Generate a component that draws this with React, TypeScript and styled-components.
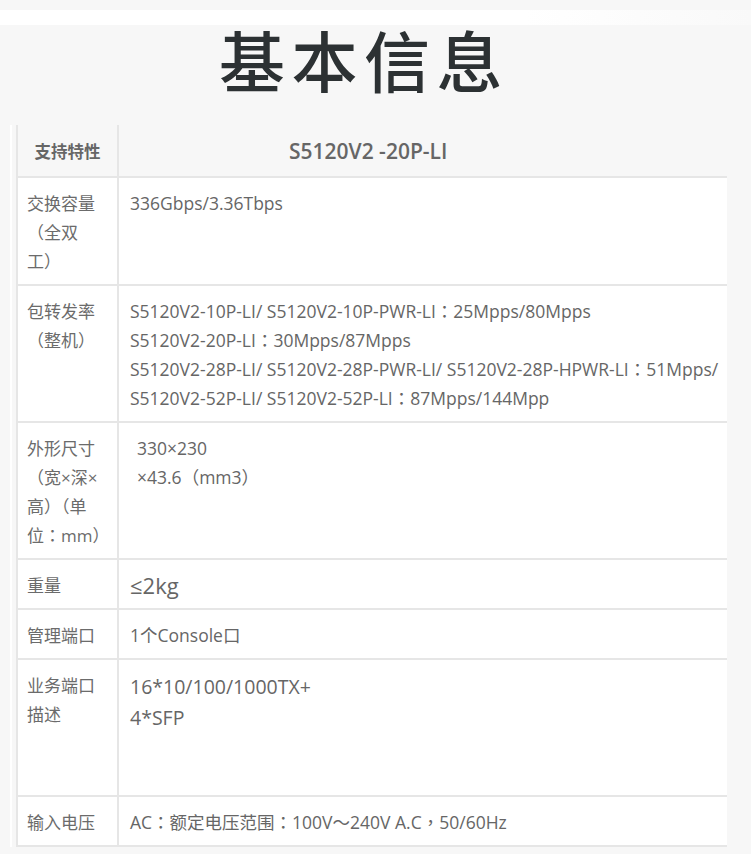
import React from "react";
import styled, { createGlobalStyle } from "styled-components";

type SpecRow = {
  label: string[];
  lines: string[];
  size?: number;
  lineHeight?: number;
  indent?: boolean;
  minHeight?: number;
};

const rows: SpecRow[] = [
  { label: ["交换容量", "（全双", "工）"], lines: ["336Gbps/3.36Tbps"] },
  {
    label: ["包转发率", "（整机）"],
    lines: [
      "S5120V2-10P-LI/ S5120V2-10P-PWR-LI：25Mpps/80Mpps",
      "S5120V2-20P-LI：30Mpps/87Mpps",
      "S5120V2-28P-LI/ S5120V2-28P-PWR-LI/ S5120V2-28P-HPWR-LI：51Mpps/",
      "S5120V2-52P-LI/ S5120V2-52P-LI：87Mpps/144Mpp",
    ],
  },
  {
    label: ["外形尺寸", "（宽×深×", "高）（单", "位：mm）"],
    lines: ["330×230", "×43.6（mm3）"],
    indent: true,
  },
  { label: ["重量"], lines: ["≤2kg"], size: 22 },
  { label: ["管理端口"], lines: ["1个Console口"] },
  {
    label: ["业务端口", "描述"],
    lines: ["16*10/100/1000TX+", "4*SFP"],
    size: 19.5,
    lineHeight: 31,
    minHeight: 135,
  },
  { label: ["输入电压"], lines: ["AC：额定电压范围：100V～240V A.C，50/60Hz"] },
];

// full-width punctuation sits centred in the reference, as the TC forms do
const withPunct = (text: string) =>
  text.split(/([：（），～])/).map((part, i) =>
    /^[：（），～]$/.test(part) ? <Punct key={i}>{part}</Punct> : part
  );

function App() {
  return (
    <Page>
      <GlobalStyle />
      <TopBand />
      <Title>基本信息</Title>
      <TableFrame>
        <Table>
          <Row $head>
            <HeadLabel>支持特性</HeadLabel>
            <HeadModel>S5120V2 -20P-LI</HeadModel>
          </Row>
          {rows.map((row, index) => (
            <Row key={index} $minHeight={row.minHeight}>
              <Label>
                {row.label.map((line, i) => (
                  <Line key={i}>{withPunct(line)}</Line>
                ))}
              </Label>
              <Value
                $size={row.size}
                $lineHeight={row.lineHeight}
                $indent={row.indent}
              >
                {row.lines.map((line, i) => (
                  <Line key={i}>{withPunct(line)}</Line>
                ))}
              </Value>
            </Row>
          ))}
        </Table>
      </TableFrame>
    </Page>
  );
}

export default App;

const GlobalStyle = createGlobalStyle`
  body {
    margin: 0;
    background: #f7f7f7;
  }
`;

const Page = styled.div`
  width: 751px;
  height: 854px;
  overflow: hidden;
  background: #f7f7f7;
  font-family: "Open Sans", "Noto Sans CJK SC", sans-serif;
`;

const TopBand = styled.div`
  height: 15px;
  margin-top: 10px;
  background: linear-gradient(to right, #ffffff 0%, #ffffff 70%, #f9f9f9 100%);
`;

const Title = styled.h1`
  margin: 0;
  padding-left: 219px;
  height: 100px;
  font-family: "Noto Sans CJK SC", sans-serif;
  font-size: 66px;
  font-weight: 500;
  line-height: 66px;
  letter-spacing: 6.5px;
  color: #2c3133;
`;

const TableFrame = styled.div`
  margin-left: 10px;
  width: 717px;
  padding-left: 4px;
  border-left: 2px solid #ffffff;
  box-sizing: border-box;
`;

const Table = styled.div`
  width: 711px;
  overflow: hidden;
  border-left: 2px solid #e6e6e6;
  box-sizing: border-box;
`;

const Row = styled.div<{ $head?: boolean; $minHeight?: number }>`
  display: grid;
  grid-template-columns: 101px 1fr;
  border-bottom: 2px solid #e6e6e6;
  background: ${(p) => (p.$head ? "#f7f7f7" : "#ffffff")};
  min-height: ${(p) => (p.$minHeight ? `${p.$minHeight}px` : "auto")};
`;

const Label = styled.div`
  border-right: 2px solid #e6e6e6;
  padding: 11px 4px 8px 9px;
  font-size: 17px;
  line-height: 29px;
  color: #6b6b6b;
`;

const Value = styled.div<{ $size?: number; $lineHeight?: number; $indent?: boolean }>`
  padding: 11px 0 8px ${(p) => (p.$indent ? 18 : 11)}px;
  font-size: ${(p) => p.$size ?? 17.5}px;
  line-height: ${(p) => p.$lineHeight ?? 29}px;
  color: #666666;
  white-space: nowrap;
  overflow: hidden;
`;

const Line = styled.div``;

const Punct = styled.span`
  font-family: "Noto Sans CJK TC", sans-serif;
  line-height: 1;
`;

const HeadLabel = styled.div`
  border-right: 2px solid #e6e6e6;
  height: 51px;
  display: flex;
  align-items: center;
  justify-content: center;
  font-size: 16.5px;
  font-weight: 700;
  color: #666666;
`;

const HeadModel = styled.div`
  display: flex;
  align-items: center;
  padding-left: 170px;
  font-size: 21px;
  font-weight: 600;
  color: #666666;
`;
